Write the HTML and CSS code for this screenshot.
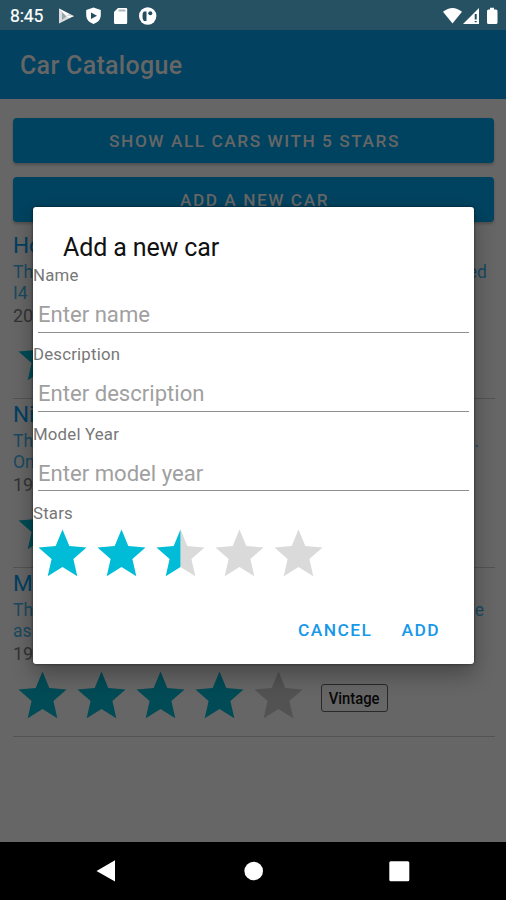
FILE: index.html
```html
<!DOCTYPE html>
<html lang="en">
<head>
<meta charset="utf-8">
<title>Car Catalogue</title>
<link rel="stylesheet" href="styles.css">
</head>
<body>
<svg class="defs" width="0" height="0">
  <symbol id="star" viewBox="0 0 59 60" preserveAspectRatio="none">
    <path d="M29.5 43.1 44.3 52.3 40.4 35 53.5 23.5 36.3 22 29.5 5.6 22.7 22 5.5 23.5 18.6 35 14.7 52.3z"/>
  </symbol>
</svg>
<div class="phone">
  <header class="status">
    <span class="time">8:45</span>
    <svg class="st-icons" width="102" height="20" viewBox="0 0 102 20">
      <path fill="#ddd" d="M2 2.500v15l15-7.500z"/><path fill="#92a8b1" d="M5 6v8l5-4z"/><path fill="#fff" d="M2 2.500l10 5.500-3 2zM9 10l8 0-5 2z"/>
      <path fill="#fff" d="M36.500 1.500 29.200 4v5c0 4.500 3 7.500 7.300 9 4.300-1.500 7.300-4.500 7.300-9V4z"/><path fill="#234d60" d="M34 6.500v6.500l6-3.200z"/>
      <path fill="#fff" d="M61 2h8q1.200 0 1.200 1.200v13.600q0 1.200-1.200 1.200H58.200q-1.200 0-1.200-1.200V6z"/><path fill="#a9b8bf" d="M61.500 3.500h7v2h-7z"/>
      <circle cx="90.700" cy="10" r="8.700" fill="#fff"/><path fill="#234d60" d="M87 5.500h2.500v9.500H87q-1.500-1-1.500-5t1.500-4.500z"/><circle cx="93.300" cy="7.300" r="2" fill="#234d60"/>
    </svg>
    <svg class="sys" width="56" height="20" viewBox="0 0 56 20">
      <path fill="#fff" d="M0 5.800Q9.500-2 19 5.800L9.500 17.500z"/>
      <path fill="#fff" d="M20 18 36 2v16z"/><path fill="#234d60" d="M31.700 8h2v5.500h-2zM31.700 15h2v1.300h-2z"/>
      <path fill="#fff" d="M47 1.800h4v1.700h2q1.500 0 1.500 1.500v11.500q0 1.500-1.500 1.500h-7.500Q44 18 44 16.500V5q0-1.500 1.500-1.500H47z"/>
    </svg>
  </header>
  <div class="appbar">Car Catalogue</div>
  <main class="page">
    <div class="btn">SHOW ALL CARS WITH 5 STARS</div>
    <div class="btn second">ADD A NEW CAR</div>
    <div class="list">
      <section class="item">
        <h2>Ho</h2>
        <div class="desc"><span>Th</span><span>ed</span></div>
        <div class="desc">I4</div>
        <div class="year">20</div>
        <div class="rating"><svg class="star"><use href="#star"/></svg></div>
      </section>
      <section class="item">
        <h2>Ni</h2>
        <div class="desc"><span>Th</span><span class="dot">.</span></div>
        <div class="desc">On</div>
        <div class="year">19</div>
        <div class="rating"><svg class="star"><use href="#star"/></svg></div>
      </section>
      <section class="item last">
        <h2>M</h2>
        <div class="desc"><span>Th</span><span class="end">e</span></div>
        <div class="desc">as</div>
        <div class="year">19</div>
        <div class="rating">
          <svg class="star"><use href="#star"/></svg><svg class="star"><use href="#star"/></svg><svg class="star"><use href="#star"/></svg><svg class="star"><use href="#star"/></svg><svg class="star off"><use href="#star"/></svg>
          <span class="tag"><span class="tag-text">Vintage</span></span>
        </div>
      </section>
    </div>
  </main>
  <nav class="nav">
    <svg width="506" height="58" viewBox="0 0 506 58">
      <path fill="#fff" d="M96.500 29 115 18.300v21.200z"/>
      <circle cx="253.700" cy="29" r="9.300" fill="#fff"/>
      <rect x="389.300" y="19.200" width="20" height="20" rx="1.500" fill="#fff"/>
    </svg>
  </nav>
  <div class="dialog">
    <h1>Add a new car</h1>
    <div class="field"><label>Name</label><div class="input">Enter name</div></div>
    <div class="field"><label>Description</label><div class="input">Enter description</div></div>
    <div class="field"><label>Model Year</label><div class="input">Enter model year</div></div>
    <label>Stars</label>
    <div class="stars">
      <svg class="star"><use href="#star"/></svg><svg class="star"><use href="#star"/></svg><svg class="star half" viewBox="0 0 59 60">
        <path class="empty" d="M29.500 43.100 44.300 52.300 40.400 35 53.500 23.500 36.300 22 29.500 5.600z"/>
        <path d="M29.500 5.600 22.700 22 5.500 23.500 18.600 35 14.700 52.300 29.500 43.100z"/>
      </svg><svg class="star off"><use href="#star"/></svg><svg class="star off"><use href="#star"/></svg>
    </div>
    <div class="actions"><span class="cancel">CANCEL</span><span class="add">ADD</span></div>
  </div>
</div>
</body>
</html>
```
FILE: styles.css
```css
* { box-sizing: border-box; }
body { margin: 0; font-family: Roboto, "Liberation Sans", sans-serif; }
.defs { position: absolute; }
.phone { position: relative; width: 506px; height: 900px; overflow: hidden; background: #666; display: flex; flex-direction: column; }
.status { height: 30px; flex: none; background: #255163; color: #fff; display: flex; align-items: center; padding: 1px 7px 0 10px; }
.time { width: 47px; font-size: 17.5px; line-height: 30px; font-weight: 400; -webkit-text-stroke: 0.2px #fff; letter-spacing: -0.1px; white-space: nowrap; }
.sys { margin-left: auto; }
.appbar { height: 69px; flex: none; background: #024260; color: #666; font-size: 25px; font-weight: 500; letter-spacing: 0.3px; line-height: 72px; padding-left: 20px; }
.page { flex: 1; padding: 19px 11px 0 13px; }
.btn { height: 45px; width: 481px; border-radius: 4px; background: #004360; color: #666; font-size: 17.3px; font-weight: 500; letter-spacing: 1.53px; line-height: 46px; text-align: center; padding-left: 2px; box-shadow: 0 2px 3px rgba(0,0,0,.22); }
.second { margin-top: 14px; }
.list { width: 482px; padding-top: 7.500px; }
.item { height: 169px; border-bottom: 1.500px solid #535353; }
.item h2 { margin: 0; font-size: 22.5px; font-weight: 400; line-height: 31px; height: 32px; color: #003f63; }
.desc { display: flex; justify-content: space-between; padding-right: 8px; height: 21px; line-height: 20px; font-size: 17.5px; color: #194a60; }
.dot { margin-right: 8px; }
.end { margin-right: 3px; }
.year { height: 24px; line-height: 24px; font-size: 18px; color: #333; }
.rating { display: flex; height: 60px; }
.star { width: 59px; height: 60px; flex: none; fill: #004b56; }
.off { fill: #525252; }
.tag { width: 67px; height: 28px; margin: 18.500px 0 0 12.500px; border: 1.500px solid #292929; border-radius: 3px; color: #080808; display: flex; align-items: center; justify-content: center; }
.tag-text { font-size: 17px; font-weight: 500; transform: scaleX(.87); }
.nav { height: 58px; flex: none; background: #000; }
.nav svg { display: block; }
.dialog { position: absolute; left: 33px; top: 207px; width: 441px; height: 457px; background: #fff; border-radius: 3px; box-shadow: 0 10px 22px rgba(0,0,0,.32), 0 0 3px rgba(0,0,0,.6); }
.dialog h1 { margin: 0; padding: 24px 0 0 30px; height: 57px; font-size: 25px; font-weight: 400; line-height: 33px; letter-spacing: -0.12px; color: #111; }
.field { height: 79.300px; }
.dialog label { display: block; height: 23px; line-height: 23px; font-size: 16.800px; color: #777; letter-spacing: .2px; }
.input { height: 45.500px; margin: 0 5px; border-bottom: 1.500px solid #8f8f8f; line-height: 54px; font-size: 22.1px; color: #a0a0a0; }
.stars { display: flex; height: 60px; margin-top: -1px; }
.dialog .star { fill: #00bcd7; }
.dialog .off, .dialog .empty { fill: #dadada; }
.actions { display: flex; justify-content: flex-end; gap: 29px; padding: 34px 34px 0 0; font-size: 17.4px; font-weight: 500; line-height: 24px; letter-spacing: 1.450px; color: #1798e9; }
```
